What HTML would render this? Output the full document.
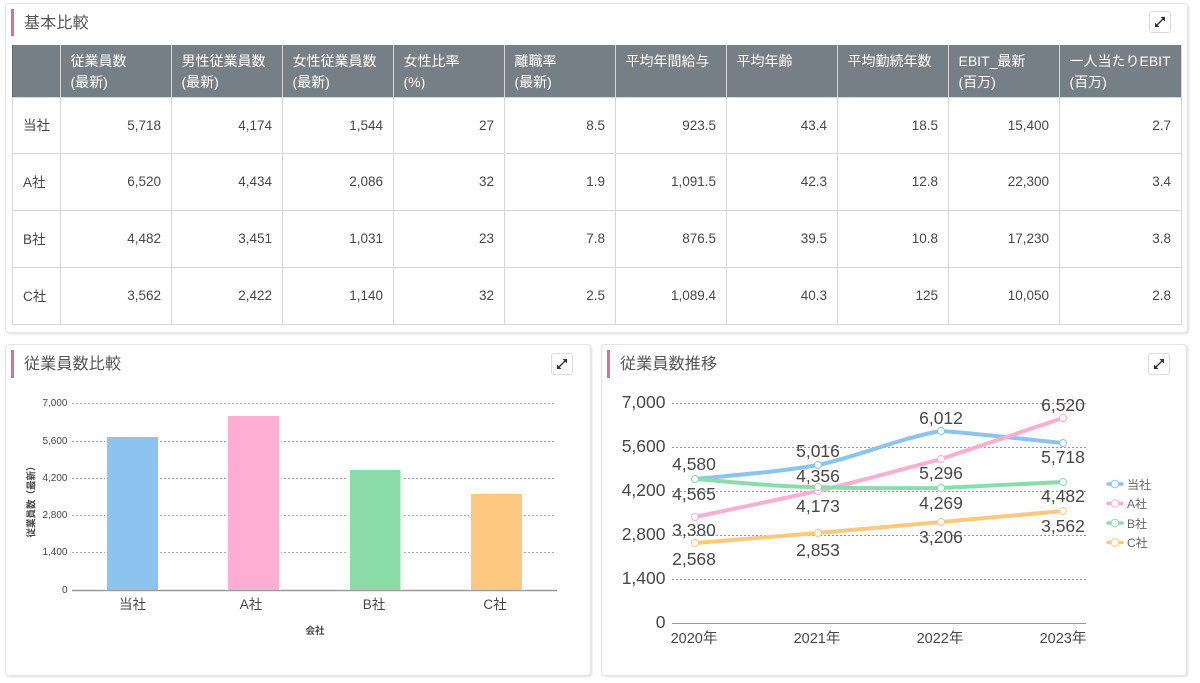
<!DOCTYPE html>
<html lang="ja"><head><meta charset="utf-8">
<style>
html,body{margin:0;padding:0;background:#fff}
body{width:1200px;height:683px;overflow:hidden;position:relative;font-family:"Liberation Sans","Noto Sans CJK JP",sans-serif;color:#444}
.card{position:absolute;background:#fff;border:1px solid #e4e5e5;border-radius:4px;box-shadow:1px 1px 2px #ddd;box-sizing:border-box}
.acc{position:absolute;width:3px;background:#dc6f93}
.ttl{position:absolute;font-size:16px;line-height:24px;color:#555;letter-spacing:.2px}
.btn{position:absolute;width:22px;height:22px;border:1px solid #ddd;border-radius:3px;box-sizing:border-box;background:#fff}
.btn svg{position:absolute;left:4px;top:4px}
table{position:absolute;left:12px;top:45px;border-collapse:collapse;table-layout:fixed;width:1169px}
th{background:#767f85;color:#fff;font-weight:400;font-size:14px;line-height:21px;text-align:left;padding:6px 9px 3px 9.5px;height:52px;box-sizing:border-box;border:1px solid #d5d7d8;border-top:0;border-bottom:1px solid #d5d7d8;vertical-align:top;white-space:nowrap}
th:first-child{border-left:1px solid #666}
td{font-size:13.500px;height:57px;box-sizing:border-box;text-align:right;padding:0 10px;border:1px solid #d5d7d8;color:#484848}
tr.r1 td{height:56px}
td:first-child{text-align:left;padding-left:10px}
td span{position:relative;top:-1px}
svg text{font-family:"Liberation Sans","Noto Sans CJK JP",sans-serif;fill:#484848}
svg.full{position:absolute;left:0;top:0}
</style></head><body>

<div class="card" style="left:5px;top:3px;width:1183px;height:330px"></div>
<div class="acc" style="left:11px;top:9px;height:27px"></div>
<div class="ttl" style="left:24px;top:12px">基本比較</div>
<div class="btn" style="left:1149px;top:11px"><svg width="12" height="12" viewBox="0 0 12 12"><path d="M3 9L9 3" stroke="#333" stroke-width="1.400"/><path d="M6.500 1H11V5.500ZM1 6.500V11H5.500Z" fill="#333"/></svg></div>

<table>
<colgroup><col style="width:48px"><col style="width:111px"><col style="width:111px"><col style="width:111px"><col style="width:111px"><col style="width:111px"><col style="width:111px"><col style="width:111px"><col style="width:111px"><col style="width:111px"><col style="width:122px"></colgroup>
<tr><th></th><th>従業員数<br>(最新)</th><th>男性従業員数<br>(最新)</th><th>女性従業員数<br>(最新)</th><th>女性比率<br>(%)</th><th>離職率<br>(最新)</th><th>平均年間給与</th><th>平均年齢</th><th>平均勤続年数</th><th>EBIT_最新<br>(百万)</th><th>一人当たりEBIT<br>(百万)</th></tr>
<tr class="r1"><td><span>当社</span></td><td>5,718</td><td>4,174</td><td>1,544</td><td>27</td><td>8.5</td><td>923.5</td><td>43.4</td><td>18.5</td><td>15,400</td><td>2.7</td></tr>
<tr><td><span>A社</span></td><td>6,520</td><td>4,434</td><td>2,086</td><td>32</td><td>1.9</td><td>1,091.5</td><td>42.3</td><td>12.8</td><td>22,300</td><td>3.4</td></tr>
<tr><td><span>B社</span></td><td>4,482</td><td>3,451</td><td>1,031</td><td>23</td><td>7.8</td><td>876.5</td><td>39.5</td><td>10.8</td><td>17,230</td><td>3.8</td></tr>
<tr><td><span>C社</span></td><td>3,562</td><td>2,422</td><td>1,140</td><td>32</td><td>2.5</td><td>1,089.4</td><td>40.3</td><td>125</td><td>10,050</td><td>2.8</td></tr>
</table>

<div class="card" style="left:5px;top:344px;width:586px;height:332px"></div>
<div class="acc" style="left:11px;top:350px;height:28px"></div>
<div class="ttl" style="left:24px;top:353px">従業員数比較</div>
<div class="btn" style="left:551px;top:353px"><svg width="12" height="12" viewBox="0 0 12 12"><path d="M3 9L9 3" stroke="#333" stroke-width="1.400"/><path d="M6.500 1H11V5.500ZM1 6.500V11H5.500Z" fill="#333"/></svg></div>

<div class="card" style="left:601px;top:344px;width:586px;height:332px"></div>
<div class="acc" style="left:607px;top:350px;height:28px"></div>
<div class="ttl" style="left:620px;top:353px">従業員数推移</div>
<div class="btn" style="left:1148px;top:353px"><svg width="12" height="12" viewBox="0 0 12 12"><path d="M3 9L9 3" stroke="#333" stroke-width="1.400"/><path d="M6.500 1H11V5.500ZM1 6.500V11H5.500Z" fill="#333"/></svg></div>

<svg class="full" width="1200" height="683" viewBox="0 0 1200 683">
<!-- bar chart -->
<g stroke="#aaa" stroke-width="1" stroke-dasharray="2 2">
<path d="M72 403.500H556M72 441.500H556M72 478.500H556M72 515.500H556M72 552.500H556"/>
</g>
<path d="M72 590.500H557" stroke="#999" stroke-width="1.500"/>
<g fill="#fff"><rect x="105" y="435" width="55" height="155"/><rect x="226" y="414" width="55" height="176"/><rect x="348" y="468" width="54.500" height="122"/><rect x="469" y="492" width="55" height="98"/></g>
<rect x="107" y="437" width="51" height="153" fill="#8bc4ee"/>
<rect x="228" y="416" width="51" height="174" fill="#fdaed2"/>
<rect x="350" y="470" width="50.500" height="120" fill="#8cdcaa"/>
<rect x="471" y="494" width="51" height="96" fill="#fec97f"/>
<g font-size="10" text-anchor="end">
<text x="67.500" y="406">7,000</text><text x="67.500" y="444">5,600</text><text x="67.500" y="481">4,200</text><text x="67.500" y="518">2,800</text><text x="67.500" y="555">1,400</text><text x="67.500" y="593">0</text>
</g>
<text transform="translate(34.500,499.500) rotate(-90)" font-size="9.500" font-weight="700" text-anchor="middle">従業員数（最新）</text>
<g font-size="13.500" text-anchor="middle">
<text x="132.500" y="609">当社</text><text x="251" y="609">A社</text><text x="374" y="609">B社</text><text x="495" y="609">C社</text>
</g>
<text x="315" y="634" font-size="9.500" font-weight="700" text-anchor="middle">会社</text>

<!-- line chart -->
<g stroke="#999" stroke-width="1" stroke-dasharray="2 2">
<path d="M672 403.500H1086M672 447.500H1086M672 491.500H1086M672 535.500H1086M672 579.500H1086"/>
</g>
<path d="M672 623.500H1086" stroke="#999" stroke-width="1"/>
<g font-size="17.500" text-anchor="end">
<text x="665.500" y="408">7,000</text><text x="665.500" y="452">5,600</text><text x="665.500" y="496">4,200</text><text x="665.500" y="540">2,800</text><text x="665.500" y="584">1,400</text><text x="665.500" y="628">0</text>
</g>
<g font-size="14.500" text-anchor="middle">
<text x="694" y="643">2020年</text><text x="817" y="643">2021年</text><text x="940" y="643">2022年</text><text x="1063" y="643">2023年</text>
</g>
<g fill="none" stroke-width="4" stroke-linecap="round" stroke-linejoin="round">
<path d="M695 479C735 475 778 472 818 465C860 456 900 438 941 431C982 434 1022 439 1063 443" stroke="#8bc4ee"/>
<path d="M695 517L818 491C860 481 900 470 941 459L1063 418" stroke="#fdaed2"/>
<path d="M695 479C735 482 778 487 818 487C860 489 900 488 941 488L1063 482" stroke="#8cdcaa"/>
<path d="M695 543L818 533L941 522L1063 511" stroke="#fec97f"/>
</g>
<g fill="#fff" stroke-width="1">
<circle cx="695" cy="479" r="3.500" stroke="#8bc4ee"/><circle cx="818" cy="465" r="3.500" stroke="#8bc4ee"/><circle cx="941" cy="431" r="3.500" stroke="#8bc4ee"/><circle cx="1063" cy="443" r="3.500" stroke="#8bc4ee"/>
<circle cx="695" cy="517" r="3.500" stroke="#fdaed2"/><circle cx="818" cy="491" r="3.500" stroke="#fdaed2"/><circle cx="941" cy="459" r="3.500" stroke="#fdaed2"/><circle cx="1063" cy="418" r="3.500" stroke="#fdaed2"/>
<circle cx="695" cy="479" r="3.500" stroke="#8cdcaa"/><circle cx="818" cy="487" r="3.500" stroke="#8cdcaa"/><circle cx="941" cy="488" r="3.500" stroke="#8cdcaa"/><circle cx="1063" cy="482" r="3.500" stroke="#8cdcaa"/>
<circle cx="695" cy="543" r="3.500" stroke="#fec97f"/><circle cx="818" cy="533" r="3.500" stroke="#fec97f"/><circle cx="941" cy="522" r="3.500" stroke="#fec97f"/><circle cx="1063" cy="511" r="3.500" stroke="#fec97f"/>
</g>
<g font-size="17.500" text-anchor="middle">
<text x="694" y="470">4,580</text><text x="818" y="457">5,016</text><text x="941" y="424">6,012</text><text x="1063" y="411">6,520</text>
<text x="694" y="500">4,565</text><text x="818" y="482">4,356</text><text x="941" y="479">5,296</text><text x="1063" y="463">5,718</text>
<text x="694" y="536">3,380</text><text x="818" y="512">4,173</text><text x="941" y="509">4,269</text><text x="1063" y="502">4,482</text>
<text x="694" y="565">2,568</text><text x="818" y="556">2,853</text><text x="941" y="543">3,206</text><text x="1063" y="532">3,562</text>
</g>
<!-- legend -->
<g stroke-width="3.500" stroke-linecap="round">
<path d="M1108 484H1122" stroke="#8bc4ee"/><path d="M1108 503.500H1122" stroke="#fdaed2"/><path d="M1108 523H1122" stroke="#8cdcaa"/><path d="M1108 542.500H1122" stroke="#fec97f"/>
</g>
<g fill="#fff" stroke-width="1">
<circle cx="1115" cy="484" r="3.800" stroke="#8bc4ee"/><circle cx="1115" cy="503.500" r="3.800" stroke="#fdaed2"/><circle cx="1115" cy="523" r="3.800" stroke="#8cdcaa"/><circle cx="1115" cy="542.500" r="3.800" stroke="#fec97f"/>
</g>
<g font-size="12">
<text x="1127" y="489" style="fill:#666">当社</text><text x="1127" y="508" style="fill:#666">A社</text><text x="1127" y="528" style="fill:#666">B社</text><text x="1127" y="547" style="fill:#666">C社</text>
</g>
</svg>
</body></html>
